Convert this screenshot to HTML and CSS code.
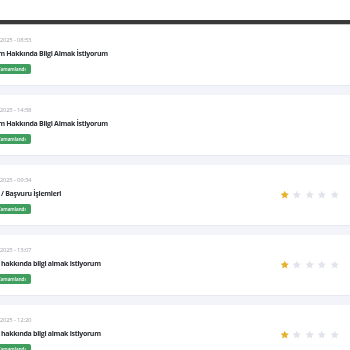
FILE: index.html
```html
<!DOCTYPE html>
<html lang="tr">
<head>
  <meta charset="UTF-8">
  <title>Taleplerim</title>
  <link rel="stylesheet" href="styles.css">
</head>
<body>
<div class="top"></div>
<div class="bar"></div>
<ul class="list">
  <li class="card">
    <div class="info">
      <p class="date">12.03.2025 - 08:53</p>
      <p class="title">Sistem Hakkında Bilgi Almak İstiyorum</p>
      <span class="badge"><i class="tick">&#10003;</i>Tamamlandı</span>
    </div>
  </li>
  <li class="card">
    <div class="info">
      <p class="date">10.03.2025 - 14:58</p>
      <p class="title">Sistem Hakkında Bilgi Almak İstiyorum</p>
      <span class="badge"><i class="tick">&#10003;</i>Tamamlandı</span>
    </div>
  </li>
  <li class="card">
    <div class="info">
      <p class="date">06.03.2025 - 09:34</p>
      <p class="title">Kayıt / Başvuru İşlemleri</p>
      <span class="badge"><i class="tick">&#10003;</i>Tamamlandı</span>
    </div>
    <div class="stars" data-rate="1"></div>
  </li>
  <li class="card">
    <div class="info">
      <p class="date">04.03.2025 - 13:07</p>
      <p class="title">Ürün hakkında bilgi almak istiyorum</p>
      <span class="badge"><i class="tick">&#10003;</i>Tamamlandı</span>
    </div>
    <div class="stars" data-rate="1"></div>
  </li>
  <li class="card">
    <div class="info">
      <p class="date">03.03.2025 - 12:20</p>
      <p class="title">Ürün hakkında bilgi almak istiyorum</p>
      <span class="badge"><i class="tick">&#10003;</i>Tamamlandı</span>
    </div>
    <div class="stars" data-rate="1"></div>
  </li>
</ul>
<script>
  // yildizlari olustur
  var star = '<svg viewBox="0 0 24 24"><path d="M12 1.8l3.1 6.6 7.2.9-5.3 5 1.4 7.1L12 17.9l-6.4 3.5 1.4-7.1-5.3-5 7.2-.9z"/></svg>';
  var boxes = document.querySelectorAll(".stars");
  for(var i=0;i<boxes.length;i++){
      var rate = boxes[i].getAttribute("data-rate");
      for(var j=0;j<5;j++){
          var s = document.createElement("span");
          s.className = j<rate ? "star on" : "star";
          s.innerHTML = star;
          boxes[i].appendChild(s);
      }
  }
</script>
</body>
</html>
```
FILE: styles.css
```css
* {
  padding: 0;
  margin: 0;
  list-style: none;
  border: 0;
}

body {
  width: 350px;
  height: 350px;
  overflow: hidden;
  background: #fff;
  font-family: "Open Sans", "Noto Sans", sans-serif;
}

.top {
  height: 20px;
  background: #fff;
}

.bar {
  height: 4px;
  background: #393939;
  border-bottom: 1px solid #c4c4c4;
}

.list {
  display: flex;
  flex-direction: column;
  gap: 10px;
  background: #f2f4f9;
  margin-left: -17px;
}

.card {
  display: flex;
  align-items: center;
  justify-content: space-between;
  height: 60px;
  box-sizing: border-box;
  padding: 0 11px 0 0;
  background: #fff;
  box-shadow: 0 1px 1px #e6e9f1;
}

.info {
  display: flex;
  flex-direction: column;
  align-items: flex-start;
  will-change: transform;
}

.date {
  font-size: 6px;
  line-height: 8px;
  letter-spacing: -0.2px;
  padding-left: 1px;
  color: #a3a6ad;
  margin-bottom: 5px;
}

.title {
  font-size: 7px;
  line-height: 10px;
  letter-spacing: -0.3px;
  font-weight: 700;
  color: #2a2d32;
  white-space: nowrap;
  margin-bottom: 5px;
}

.badge {
  display: flex;
  align-items: center;
  height: 10px;
  padding: 0 5px 0 5px;
  border-radius: 2px;
  background: #3f9d5d;
  color: #fff;
  font-size: 4.6px;
  font-weight: 600;
}

.tick {
  font-style: normal;
  width: 6px;
  margin-right: 4px;
}

.stars {
  display: flex;
  gap: 3px;
}

.star svg {
  display: block;
  width: 9.5px;
  height: 9.5px;
  fill: #e2e4eb;
}

.star.on svg {
  fill: #e6b22e;
}
```
